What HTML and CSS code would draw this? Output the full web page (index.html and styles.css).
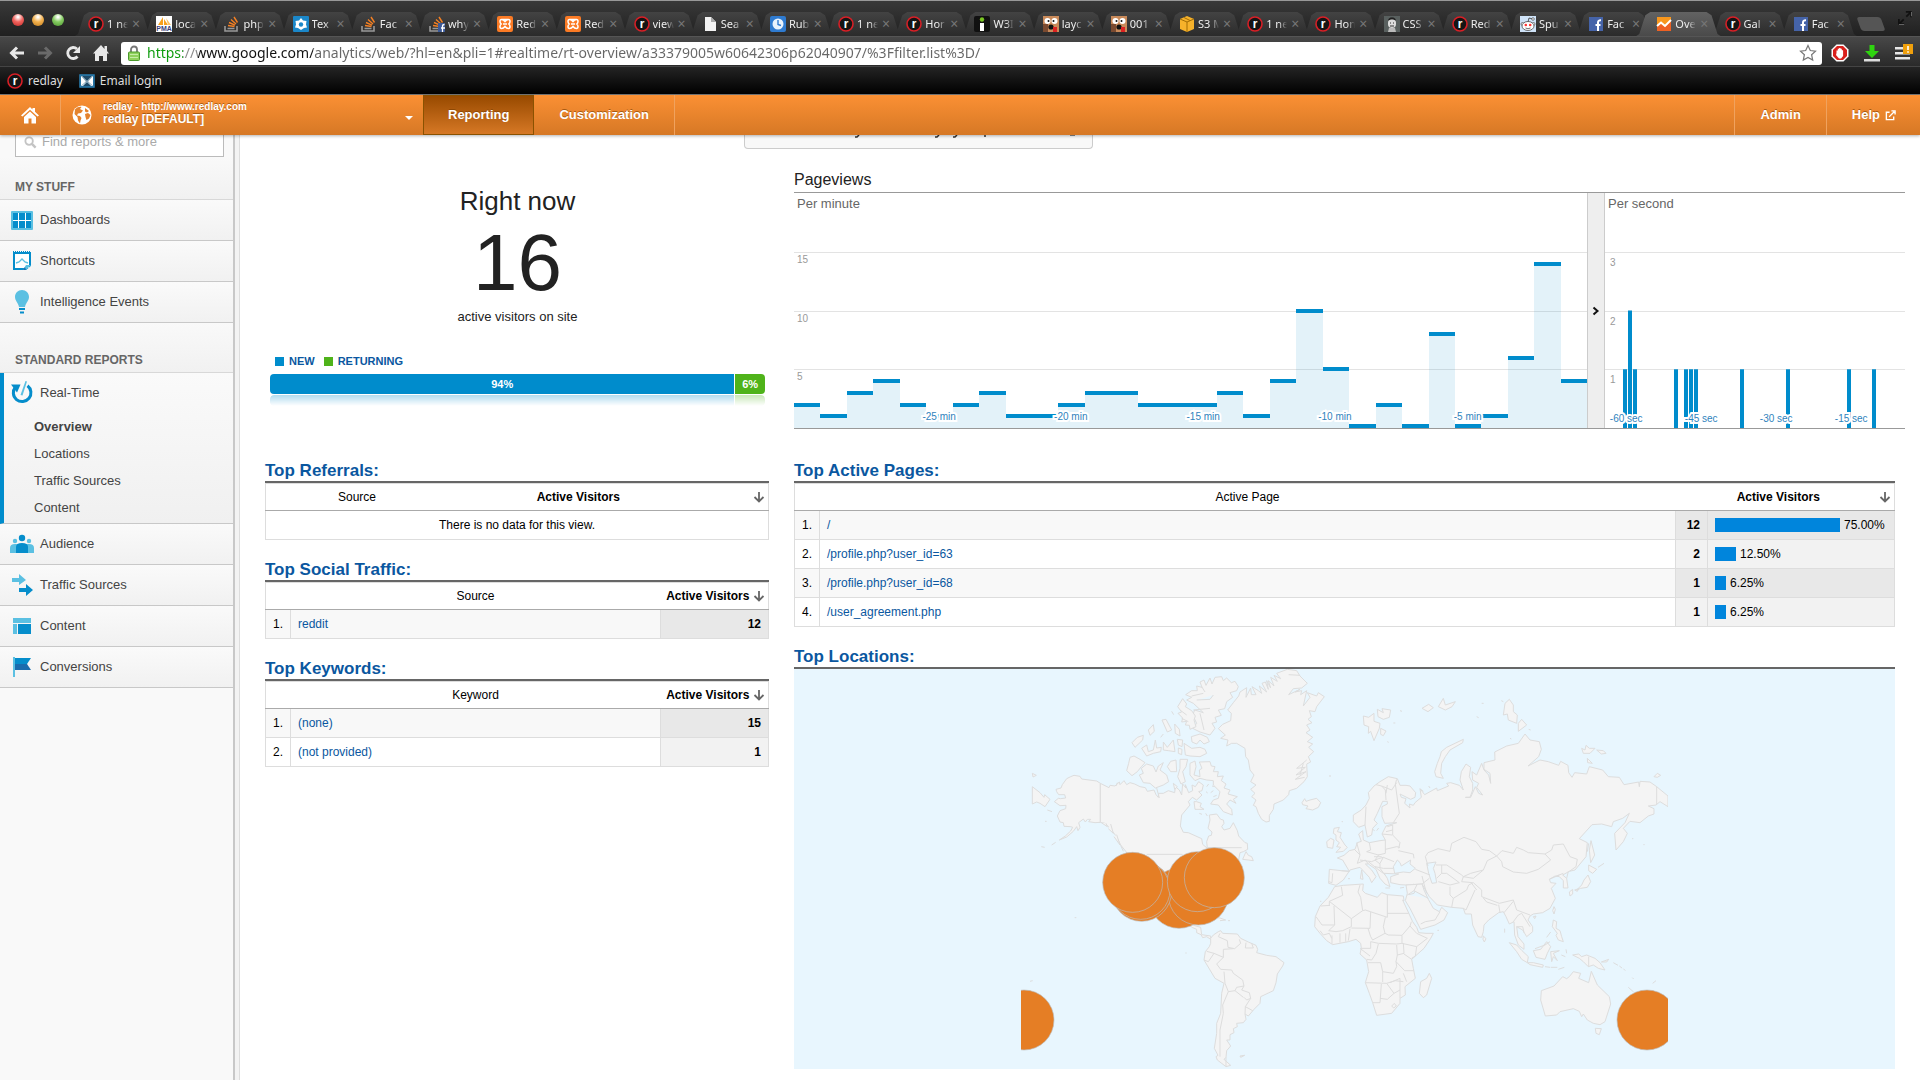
FILE: index.html
```html
<!DOCTYPE html>
<html lang="en">
<head>
<meta charset="utf-8">
<title>Overview - Google Analytics</title>
<link rel="stylesheet" href="styles.css">
</head>
<body>
<svg class="sprite" aria-hidden="true">
  <symbol id="f-r" viewBox="0 0 16 16"><circle cx="8" cy="8" r="7" fill="#151515" stroke="#d81f26" stroke-width="1.6"/><text x="8" y="12" text-anchor="middle" font-family="Liberation Sans, sans-serif" font-weight="700" font-size="12" fill="#fff">r</text></symbol>
  <symbol id="f-pma" viewBox="0 0 16 16"><path d="M0 0h16v16H0z" fill="#fff"/><path d="M2 9 7 1v8zM8 9V3l4 6z" fill="#f8a01c"/><path d="M12 9 10 2l5 7z" fill="#fbc265"/><text x="8" y="15" text-anchor="middle" font-family="Liberation Sans, sans-serif" font-weight="700" font-size="7" fill="#3b3f7a">PMA</text></symbol>
  <symbol id="f-so" viewBox="0 0 16 16"><path d="M1 10v5h12v-5M3.500 12.500h7" fill="none" stroke="#999" stroke-width="1.600"/><path d="m4 9.500 6.500 1M5 6.500l6 2.700M7 3.500l5 4.500M10 1l3.500 5.500" stroke="#f48024" stroke-width="1.400"/></symbol>
  <symbol id="f-sof" viewBox="0 0 16 16"><use href="#f-so"/><path d="M9 7h7v9H9z" fill="#3b5998"/><path d="M13.500 16v-6q0-1.500 2-1.500M12 12h4" fill="none" stroke="#fff" stroke-width="1.300"/></symbol>
  <symbol id="f-tex" viewBox="0 0 16 16"><rect width="16" height="16" rx="1" fill="#1b87c9"/><path d="m8 2 2 2.500 3.500.5L13 8.500l1 3-3 .5-3 2-3-2-3-.5 1-3L2.500 5 6 4.500z" fill="#fff"/><circle cx="8" cy="8.500" r="2.200" fill="#1b87c9"/></symbol>
  <symbol id="f-xampp" viewBox="0 0 16 16"><rect width="16" height="16" rx="2" fill="#fb7a24"/><path d="M4.500 3.500h7q1.500 0 1.500 2 0 1.500-1.200 2.500 1.200 1 1.200 2.500 0 2-1.500 2-2 0-3.500-2-1.500 2-3.500 2Q3 12.500 3 10.500 3 9 4.200 8 3 7 3 5.500q0-2 1.500-2 2 0 3.500 2 1.500-2 3.500-2M6 8h4" fill="none" stroke="#fff" stroke-width="1.500"/></symbol>
  <symbol id="f-doc" viewBox="0 0 16 16"><path d="M3 1h6l5 5v9H3z" fill="#f2f2f2"/><path d="M9 1v5h5z" fill="#aaa"/></symbol>
  <symbol id="f-clock" viewBox="0 0 16 16"><rect width="16" height="16" rx="2" fill="#2f7bd0"/><circle cx="8" cy="8" r="5.500" fill="#e9f3fc"/><path d="M8 4v4.500l3 1" fill="none" stroke="#2f7bd0" stroke-width="1.400"/></symbol>
  <symbol id="f-i" viewBox="0 0 16 16"><rect width="16" height="16" rx="2" fill="#111"/><circle cx="8" cy="3.500" r="2.200" fill="#7ac623"/><path d="M6 7h4v8H6z" fill="#fff"/></symbol>
  <symbol id="f-dog" viewBox="0 0 16 16"><path d="M0 0h16v16H0z" fill="#c98a5a"/><path d="M0 8h5v8H0z" fill="#7a4a30"/><circle cx="4.500" cy="5" r="3" fill="#fff"/><circle cx="11.500" cy="5" r="3" fill="#fff"/><circle cx="5.500" cy="5" r="1" fill="#111"/><circle cx="10.500" cy="5" r="1" fill="#111"/><circle cx="8" cy="11" r="2.600" fill="#111"/><path d="M10 11h4v5h-4z" fill="#d22"/></symbol>
  <symbol id="f-s3" viewBox="0 0 16 16"><path d="m8 0 7 3v10l-7 3-7-3V3z" fill="#f6b22b"/><path d="m1 3 7 3 7-3M8 6v10M5 1.500l6 3" fill="none" stroke="#a26d05" stroke-width="1"/></symbol>
  <symbol id="f-man" viewBox="0 0 16 16"><path d="M0 0h16v16H0z" fill="#59605f"/><path d="M4 7c0-7 8-7 8 0 0 2 0 5-4 5S4 9 4 7z" fill="#ddd"/><path d="M5 12h6l1 4H4z" fill="#bbb"/><path d="M4 5c0-5 8-5 8 0-2-2-6-2-8 0z" fill="#222"/><path d="M6 7h1M9 7h1M6 10h4" stroke="#333"/></symbol>
  <symbol id="f-reddit" viewBox="0 0 16 16"><path d="M0 0h16v16H0z" fill="#cfe3f8"/><path d="M8 6 9 2l4 1" fill="none" stroke="#333" stroke-width=".8"/><circle cx="13" cy="3" r="1.300" fill="#fff" stroke="#333" stroke-width=".6"/><circle cx="2.500" cy="8" r="1.500" fill="#fff" stroke="#333" stroke-width=".6"/><circle cx="13.500" cy="8" r="1.500" fill="#fff" stroke="#333" stroke-width=".6"/><ellipse cx="8" cy="10" rx="6" ry="4.500" fill="#fff" stroke="#333" stroke-width=".7"/><circle cx="5.800" cy="9" r="1.300" fill="#f33"/><circle cx="10.200" cy="9" r="1.300" fill="#f33"/><path d="M5.500 12q2.500 1.500 5 0" fill="none" stroke="#333" stroke-width=".7"/></symbol>
  <symbol id="f-fb" viewBox="0 0 16 16"><path d="M1 1h14v14H1z" fill="#4563a8"/><path d="M10 15V6.500Q10 4 13 4.200M7.500 9h5" fill="none" stroke="#fff" stroke-width="2"/></symbol>
  <symbol id="f-ga" viewBox="0 0 16 16"><path d="M1 1h14v14H1z" fill="#f8971d"/><path d="M1 10l4-2 4 3 6-6v10H1z" fill="#ee6123"/><path d="m1 10 4-3.500 4 3.500 6-6" fill="none" stroke="#fff" stroke-width="2"/></symbol>
  <symbol id="f-mail" viewBox="0 0 16 16"><path d="M1 2h14v12H1z" fill="#1f4a68" stroke="#2a80b4" stroke-width="1.500"/><path d="M2 3l5 5.500L2 13zM14 3 9 8.500l5 4.500z" fill="#fff"/><path d="M2 3h12L8 9zM2 13l5-4h2l5 4z" fill="#cfe4f0"/><path d="M3 3h10L8 8zM4 13l4-4 4 4z" fill="#1f4a68"/></symbol>
  <symbol id="sort" viewBox="0 0 12 12"><path d="M6 1v9M1.500 6 6 10.500 10.500 6" fill="none" stroke="#666" stroke-width="1.800"/></symbol>
</svg>

<header class="browser">
  <div class="tabstrip">
    <div class="lights"><i class="light red"></i><i class="light amber"></i><i class="light green"></i></div>
    <nav class="tabs" aria-label="Open tabs">
      <div class="tab"><svg><use href="#f-r"/></svg><a href="#">1 ne</a><button aria-label="Close">×</button></div>
      <div class="tab"><svg><use href="#f-pma"/></svg><a href="#">loca</a><button aria-label="Close">×</button></div>
      <div class="tab"><svg><use href="#f-so"/></svg><a href="#">php</a><button aria-label="Close">×</button></div>
      <div class="tab"><svg><use href="#f-tex"/></svg><a href="#">Tex</a><button aria-label="Close">×</button></div>
      <div class="tab"><svg><use href="#f-so"/></svg><a href="#">Fac</a><button aria-label="Close">×</button></div>
      <div class="tab"><svg><use href="#f-sof"/></svg><a href="#">why</a><button aria-label="Close">×</button></div>
      <div class="tab"><svg><use href="#f-xampp"/></svg><a href="#">Red</a><button aria-label="Close">×</button></div>
      <div class="tab"><svg><use href="#f-xampp"/></svg><a href="#">Red</a><button aria-label="Close">×</button></div>
      <div class="tab"><svg><use href="#f-r"/></svg><a href="#">view</a><button aria-label="Close">×</button></div>
      <div class="tab"><svg><use href="#f-doc"/></svg><a href="#">Sea</a><button aria-label="Close">×</button></div>
      <div class="tab"><svg><use href="#f-clock"/></svg><a href="#">Rub</a><button aria-label="Close">×</button></div>
      <div class="tab"><svg><use href="#f-r"/></svg><a href="#">1 ne</a><button aria-label="Close">×</button></div>
      <div class="tab"><svg><use href="#f-r"/></svg><a href="#">Hor</a><button aria-label="Close">×</button></div>
      <div class="tab"><svg><use href="#f-i"/></svg><a href="#">W3I</a><button aria-label="Close">×</button></div>
      <div class="tab"><svg><use href="#f-dog"/></svg><a href="#">layc</a><button aria-label="Close">×</button></div>
      <div class="tab"><svg><use href="#f-dog"/></svg><a href="#">001</a><button aria-label="Close">×</button></div>
      <div class="tab"><svg><use href="#f-s3"/></svg><a href="#">S3 M</a><button aria-label="Close">×</button></div>
      <div class="tab"><svg><use href="#f-r"/></svg><a href="#">1 ne</a><button aria-label="Close">×</button></div>
      <div class="tab"><svg><use href="#f-r"/></svg><a href="#">Hon</a><button aria-label="Close">×</button></div>
      <div class="tab"><svg><use href="#f-man"/></svg><a href="#">CSS</a><button aria-label="Close">×</button></div>
      <div class="tab"><svg><use href="#f-r"/></svg><a href="#">Red</a><button aria-label="Close">×</button></div>
      <div class="tab"><svg><use href="#f-reddit"/></svg><a href="#">Spu</a><button aria-label="Close">×</button></div>
      <div class="tab"><svg><use href="#f-fb"/></svg><a href="#">Fac</a><button aria-label="Close">×</button></div>
      <div class="tab active"><svg><use href="#f-ga"/></svg><a href="#">Ove</a><button aria-label="Close">×</button></div>
      <div class="tab"><svg><use href="#f-r"/></svg><a href="#">Gal</a><button aria-label="Close">×</button></div>
      <div class="tab"><svg><use href="#f-fb"/></svg><a href="#">Fac</a><button aria-label="Close">×</button></div>
    </nav>
    <button class="newtab" aria-label="New tab"></button>
    <svg class="full" viewBox="0 0 16 16"><path d="M9 1h6v6M15 1 9.500 6.500M7 15H1V9M1 15l5.500-5.500" fill="none" stroke="#111" stroke-width="2"/><path d="M1 15.500h6M15.500 1v5" stroke="#777" fill="none"/></svg>
  </div>
  <div class="toolbar">
    <button aria-label="Back"><svg viewBox="0 0 16 16"><path d="M15 8H3M8 2.500 2.500 8 8 13.500" fill="none" stroke="#e8e8e8" stroke-width="3"/></svg></button>
    <button aria-label="Forward"><svg viewBox="0 0 16 16"><path d="M1 8h12M8 2.500 13.500 8 8 13.500" fill="none" stroke="#6a6a6a" stroke-width="3"/></svg></button>
    <button aria-label="Reload"><svg viewBox="0 0 16 16"><path d="M12.500 11.500A5.500 5.500 0 1 1 12 4" fill="none" stroke="#e8e8e8" stroke-width="2.800"/><path d="M15 1v7H8z" fill="#e8e8e8"/></svg></button>
    <button aria-label="Home"><svg viewBox="0 0 16 16"><path d="M8 0 0 8.500h2V16h4v-5h4v5h4V8.500h2L14 6V1h-2.500v3z" fill="#e8e8e8"/></svg></button>
    <div class="omnibox">
      <svg class="lock" viewBox="0 0 12 16"><path d="M3 8V4.500a3 3 0 0 1 6 0V8" fill="none" stroke="#777" stroke-width="1.800"/><rect x=".5" y="7" width="11" height="8.500" rx="1" fill="#8fd15c" stroke="#4b9a2b"/><path d="M2 9.500h8M2 12.500h8" stroke="#c5eda6"/></svg>
      <input class="url" aria-label="Address" value="https://www.google.com/analytics/web/?hl=en&amp;pli=1#realtime/rt-overview/a33379005w60642306p62040907/%3Ffilter.list%3D/">
      <svg class="star" viewBox="0 0 18 18"><path d="m9 1.500 2.300 5 5.200.6-3.900 3.600 1.100 5.400L9 13.400l-4.700 2.700 1.100-5.400L1.500 7.100l5.200-.6z" fill="#fff" stroke="#777" stroke-width="1.200"/></svg>
    </div>
    <button class="ext" aria-label="Ad blocker"><svg viewBox="0 0 18 18"><path d="M5.500.5h7l5 5v7l-5 5h-7l-5-5v-7z" fill="#fff"/><path d="M6 2h6l4 4v6l-4 4H6l-4-4V6z" fill="#d9201c"/><path d="M5.500 9V6.500h1.300V4.800h1.300V4h1.400v.8h1.300v1.400h1.300V12l-2 2.500H8L5 11z" fill="#fff"/></svg></button>
    <button class="ext" aria-label="Downloads"><svg viewBox="0 0 18 18"><path d="M6.500 1h5v6H16l-7 7-7-7h4.500z" fill="#2fd410"/><path d="M1 15h16v2.500H1z" fill="#ddd"/></svg></button>
    <button class="ext" aria-label="Menu"><svg viewBox="0 0 18 18"><path d="M0 3h13v2.500H0zm0 5h15v2.500H0zm0 5h15v2.500H0z" fill="#e8e8e8"/><path d="M8 0h10v10H8z" fill="#f0a00c"/><path d="M13 2v4M13 7.200v1.500" stroke="#fff" stroke-width="1.600"/></svg></button>
  </div>
  <nav class="bookmarks">
    <a href="#"><svg><use href="#f-r"/></svg>redlay</a>
    <a href="#"><svg><use href="#f-mail"/></svg>Email login</a>
  </nav>
</header>

<div class="gabar">
  <a class="homelink" href="#" aria-label="Home"><svg viewBox="0 0 20 18"><path d="M10 1 1 9.500l1.500 1L10 3.800l7.500 6.700 1.500-1-4-3.800V2h-2.500v1.500z" fill="#fff"/><path d="M10 5.500 4 11v6.500h4.500v-5h3v5H16V11z" fill="#fff"/></svg></a>
  <button class="account"><svg viewBox="0 0 20 20"><circle cx="10" cy="10" r="9.500" fill="#fff"/><path d="M3 4.500C5 2 8 1.500 9.500 2L8 4l3 1.500L9 8 6 8.500l-1 2 3 .5 1.500 2-1 2.500-.5 3-2-3-.5-3.500L2.500 9zM13 3l4 3-2 1.500-2-1zM13 9l3-1 2.500 2-1.500 3.500-2.500 1.500-1-3z" fill="#e5832d"/></svg>
    <span class="names"><span class="small">redlay - http://www.redlay.com</span><span>redlay [DEFAULT]</span></span><i class="caret"></i></button>
  <nav class="mainnav"><a class="current" href="#">Reporting</a><a href="#">Customization</a></nav>
  <nav class="rightnav"><a href="#">Admin</a><a href="#">Help <svg viewBox="0 0 12 12"><path d="M5 2.500H1.500v8h8V7M4.500 7.500 10 2M7 1h4v4" fill="none" stroke="#fff" stroke-width="1.500"/></svg></a></nav>
</div>

<div class="layout">
  <aside class="sidebar">
    <label class="search"><svg viewBox="0 0 14 14"><circle cx="5.500" cy="5.500" r="4" fill="none" stroke="#c4c4c4" stroke-width="2"/><path d="m8.500 8.500 4 4" stroke="#c4c4c4" stroke-width="2.600"/></svg><input type="text" placeholder="Find reports &amp; more" aria-label="Find reports"></label>
    <h2 class="first">MY STUFF</h2>
    <a class="item" href="#"><svg viewBox="0 0 24 24"><rect x="1" y="3" width="22" height="19" rx="1" fill="#5bc0e2"/><path d="M3 5h5v7H3zM9 5h6v7H9zM16 5h5v7h-5zM3 13h5v7H3zM9 13h6v7H9zM16 13h5v7h-5z" fill="#058dcb"/><path d="M8.500 5v15M15.500 5v15M3 12.500h18" stroke="#fff"/></svg>Dashboards</a>
    <a class="item" href="#"><svg viewBox="0 0 24 24"><path d="M4 4h16v16H4z" fill="#fff" stroke="#058dcb" stroke-width="2"/><path d="M3 2.500h18" stroke="#058dcb" stroke-dasharray="1 1"/><path d="m6 14 3-1 3-3 3 3 3 1" fill="none" stroke="#5bc0e2" stroke-width="1.400"/><path d="M22 16v6h-7z" fill="#f5f5f5"/><path d="M21 16h-5l-3 5h3z" fill="#5bc0e2"/><path d="m13 21 2-3 1 3z" fill="#1a6cae"/></svg>Shortcuts</a>
    <a class="item" href="#"><svg viewBox="0 0 24 24"><path d="M12 0c4 0 7 3 7 7 0 4-3 5-4 10H9C8 12 5 11 5 7c0-4 3-7 7-7z" fill="#5bc0e2"/><path d="M9 18h6v2H9zM10 21.500h4v2h-4z" fill="#058dcb"/></svg>Intelligence Events</a>
    <h2>STANDARD REPORTS</h2>
    <div class="group">
      <a class="item" href="#"><svg viewBox="0 0 24 24"><path d="M17.500 4.800A8.800 8.800 0 1 1 5.500 6" fill="none" stroke="#058dcb" stroke-width="3"/><path d="M1 3.500h9.500L7 11.500z" fill="#058dcb"/><path d="m15.500 0 1.500.5-4.500 14-2-.5z" fill="#5bc0e2"/></svg>Real-Time</a>
      <a class="sub on" href="#">Overview</a>
      <a class="sub" href="#">Locations</a>
      <a class="sub" href="#">Traffic Sources</a>
      <a class="sub" href="#">Content</a>
    </div>
    <a class="item" href="#"><svg viewBox="0 0 24 24"><circle cx="5" cy="9" r="2.200" fill="#5bc0e2"/><circle cx="19" cy="9" r="2.200" fill="#5bc0e2"/><path d="M0 21v-5q0-4 5-4h14q5 0 5 4v5z" fill="#5bc0e2"/><circle cx="12" cy="6" r="3.200" fill="#058dcb"/><path d="M6 21v-6q0-4 6-4t6 4v6z" fill="#058dcb"/></svg>Audience</a>
    <a class="item" href="#"><svg viewBox="0 0 24 24"><path d="M2 5h7V1l7 6-7 5V9H2z" fill="#5bc0e2"/><path d="M9 15h7v-4l7 6-7 6v-4H9z" fill="#058dcb"/></svg>Traffic Sources</a>
    <a class="item" href="#"><svg viewBox="0 0 24 24"><path d="M3 4h18v5H3zM3 10h4v10H3z" fill="#5bc0e2"/><path d="M8 10h13v10H8z" fill="#058dcb"/></svg>Content</a>
    <a class="item" href="#"><svg viewBox="0 0 24 24"><path d="M3 2h2v20H3z" fill="#5bc0e2"/><path d="M5 3h16l-4 6H5z" fill="#058dcb"/><path d="M5 9h12l4 6H5z" fill="#1a6cae"/></svg>Conversions</a>
  </aside>
  <div class="splitter"></div>
  <main class="main">
    <div class="chip"><svg viewBox="0 0 240 4"><path d="M24 0l-2 2h-2M104 0l-2 2h-2M122 0l-2 2h-2M150 0v2" fill="none" stroke="#333" stroke-width="1.500"/><path d="M235 0h5" stroke="#888" stroke-width="2"/></svg></div>
    <div class="cols">
      <div class="left">
        <section class="now">
          <h1>Right now</h1>
          <div class="count">16</div>
          <div class="caption">active visitors on site</div>
          <div class="legend"><i class="new"></i>NEW<i class="ret"></i>RETURNING</div>
          <div class="split"><span class="new" style="width:94%">94%</span><span class="ret" style="width:6%">6%</span></div>
          <div class="reflect"><span class="new" style="width:94%"></span><span class="ret" style="width:6%"></span></div>
        </section>
        <section>
          <h2>Top Referrals:</h2>
          <table>
            <colgroup><col class="c-num"><col class="c-src"><col></colgroup>
            <thead><tr><th></th><th>Source</th><th class="val"><div class="sorted loose"><span>Active Visitors</span><svg><use href="#sort"/></svg></div></th></tr></thead>
            <tbody><tr class="empty"><td colspan="3">There is no data for this view.</td></tr></tbody>
          </table>
        </section>
        <section>
          <h2>Top Social Traffic:</h2>
          <table>
            <colgroup><col class="c-num"><col><col class="c-vis"></colgroup>
            <thead><tr><th></th><th>Source</th><th class="val"><div class="sorted"><span>Active Visitors</span><svg><use href="#sort"/></svg></div></th></tr></thead>
            <tbody><tr><td>1.</td><td><a href="#">reddit</a></td><td class="n">12</td></tr></tbody>
          </table>
        </section>
        <section>
          <h2>Top Keywords:</h2>
          <table>
            <colgroup><col class="c-num"><col><col class="c-vis"></colgroup>
            <thead><tr><th></th><th>Keyword</th><th class="val"><div class="sorted"><span>Active Visitors</span><svg><use href="#sort"/></svg></div></th></tr></thead>
            <tbody><tr><td>1.</td><td><a href="#">(none)</a></td><td class="n">15</td></tr><tr><td>2.</td><td><a href="#">(not provided)</a></td><td class="n">1</td></tr></tbody>
          </table>
        </section>
      </div>
      <div class="right">
        <section class="views">
          <h3>Pageviews</h3>
          <div class="charts">
            <div class="chart minutes">
              <div class="lines"><i></i><i></i><i></i><i></i></div>
              <div class="bars">
                <i style="--v:2"></i><i style="--v:1"></i><i style="--v:3"></i><i style="--v:4"></i><i style="--v:2"></i><i style="--v:1"></i><i style="--v:2"></i><i style="--v:3"></i><i style="--v:1"></i><i style="--v:1"></i><i style="--v:2"></i><i style="--v:3"></i><i style="--v:3"></i><i style="--v:2"></i><i style="--v:2"></i><i style="--v:2"></i><i style="--v:3"></i><i style="--v:1"></i><i style="--v:4"></i><i style="--v:10"></i><i style="--v:5"></i><i style="--v:0"></i><i style="--v:2"></i><i style="--v:0"></i><i style="--v:8"></i><i style="--v:0"></i><i style="--v:1"></i><i style="--v:6"></i><i style="--v:14"></i><i style="--v:4"></i>
              </div>
              <div class="title">Per minute</div>
              <div class="scale"><span>15</span><span>10</span><span>5</span></div>
              <span class="tick" style="left:16.2%">-25 min</span><span class="tick" style="left:32.8%">-20 min</span><span class="tick" style="left:49.5%">-15 min</span><span class="tick" style="left:66.1%">-10 min</span><span class="tick" style="left:83.2%">-5 min</span>
            </div>
            <button class="toggle" aria-label="Collapse"><svg viewBox="0 0 8 10"><path d="m1.500 1.500 4 3.500-4 3.500" fill="none" stroke="#111" stroke-width="2"/></svg></button>
            <div class="chart seconds">
              <div class="lines"><i></i><i></i><i></i><i></i></div>
              <svg class="bars" viewBox="0 0 300 236" preserveAspectRatio="none"><path d="M18 177h4v59h-4zM23 118h4v118h-4zM28 177h4v59h-4zM69 177h4v59h-4zM79 177h4v59h-4zM84 177h4v59h-4zM89 177h4v59h-4zM135 177h4v59h-4zM181 177h4v59h-4zM242 177h4v59h-4zM267 177h4v59h-4z" fill="#008ccc"/></svg>
              <div class="title">Per second</div>
              <div class="scale low"><span>3</span><span>2</span><span>1</span></div>
              <span class="tick" style="left:1.6%">-60 sec</span><span class="tick" style="left:26.6%">-45 sec</span><span class="tick" style="left:51.6%">-30 sec</span><span class="tick" style="left:76.6%">-15 sec</span>
            </div>
          </div>
        </section>
        <section class="inset">
          <h2>Top Active Pages:</h2>
          <table class="pages">
            <colgroup><col class="c-num"><col><col class="c-cnt"><col class="c-pct"></colgroup>
            <thead><tr><th></th><th>Active Page</th><th class="val" colspan="2"><div class="sorted"><span>Active Visitors</span><svg><use href="#sort"/></svg></div></th></tr></thead>
            <tbody>
              <tr><td>1.</td><td><a href="#">/</a></td><td class="n">12</td><td class="n"><div class="meter"><i style="width:125px"></i>75.00%</div></td></tr>
              <tr><td>2.</td><td><a href="#">/profile.php?user_id=63</a></td><td class="n">2</td><td class="n"><div class="meter"><i style="width:21px"></i>12.50%</div></td></tr>
              <tr><td>3.</td><td><a href="#">/profile.php?user_id=68</a></td><td class="n">1</td><td class="n"><div class="meter"><i style="width:11px"></i>6.25%</div></td></tr>
              <tr><td>4.</td><td><a href="#">/user_agreement.php</a></td><td class="n">1</td><td class="n"><div class="meter"><i style="width:11px"></i>6.25%</div></td></tr>
            </tbody>
          </table>
        </section>
        <section class="inset">
          <h2>Top Locations:</h2>
          <div class="map">
            <svg viewBox="63 27 1941 1200" role="img" aria-label="World map of active visitors">
              <g class="land">
                <path d="M301 370 290 363 245 357 240 349 222 346 212 350 200 356 187 374 183 384 168 388 170 395 176 404 194 404 197 414 182 416 175 415 163 425 180 437 198 436 197 446 180 452 172 468 180 486 190 488 192 499 212 500 218 502 212 513 196 528 178 540 200 531 220 514 230 500 234 512 240 502 236 488 250 477 256 486 262 478 272 478 266 485 285 488 301 487Z"/>
                <path d="M301 370 327 383 330 376 345 378 358 366 360 374 372 362 380 374 390 368 404 372 420 380 436 383 442 394 462 390 468 404 475 412 476 400 490 400 505 392 524 398 526 380 538 390 545 405 548 372 558 384 556 374 566 398 578 392 576 375 586 380 596 365 610 375 606 392 596 395 606 405 590 420 577 412 565 425 570 435 560 447 545 465 541 498 550 517 565 518 605 536 608 553 622 565 620 545 626 528 634 526 636 516 624 505 630 480 628 465 650 462 662 478 670 480 672 490 665 500 672 510 690 505 700 488 712 512 716 528 735 548 742 550 743 568 730 575 720 578 712 620 560 640 540 690 480 690 400 620 378 575 362 555 350 530 330 505 315 490 301 487Z"/>
                <path d="M304 488 322 500 318 490M325 506 340 520 332 492M342 530 360 555 350 524M362 556 370 574M470 384 478 414M348 378 352 368"/>
                <path d="M440 583H548M622 563H725M590 425 604 430 600 440 612 448 585 448 582 425ZM617 460l5 8M598 460l8 3M632 398l8-6M640 410l10-4M620 380l6-8M618 395l5 4M636 378l8 2"/>
                <path d="M655 206 668 193 692 182 694 160 683 150 700 128 716 108 720 96 740 83 738 112 752 84 754 104 768 104 756 80 775 92 785 100 778 78 800 96 786 70 796 66 805 88 800 62 812 84 805 62 822 78 812 52 832 64 822 46 842 56 830 40 862 28 890 32 900 48 922 70 905 84 880 86 866 104 900 88 885 96 905 92 902 104 920 92 910 138 930 112 922 98 950 108 955 98 973 110 950 140 945 155 928 152 934 170 924 178 936 188 920 195 930 210 918 218 938 232 922 245 938 252 926 262 941 275 925 290 932 306 920 312 922 350 912 365 890 385 868 392 866 404 850 420 822 432 820 448 808 466 808 484 798 486 785 478 775 460 768 440 760 436 768 420 755 410 765 400 752 388 768 375 752 365 762 345 750 330 745 300 737 290 735 265 710 250 695 250 680 258 684 240 662 235 676 225Z"/>
                <path d="M866 44 900 46M920 300 890 325 916 322 888 345 918 335 886 358 914 352M910 310 900 345"/>
                <path d="M557 104 575 92 592 92 590 78 606 82 600 66 612 60 618 76 630 54 636 72 645 52 665 50 670 62 680 54 694 68 705 64 715 80 710 92 690 98 698 112 680 125 674 146 655 150 664 166 645 172 650 186 636 190 645 205 630 225 600 216 578 205 590 190 578 165 584 150 610 158 580 130 560 120 575 112ZM575 108 610 100M590 120 630 118 640 105M605 80 615 96M600 160 612 210M580 150 630 145"/>
                <path d="M548 116 560 132 556 140 575 152 586 168 582 180 588 200 570 208 568 196 556 195 560 184 545 186 548 174 534 160 545 156 533 140ZM540 150 560 165M545 175 565 185"/>
                <path d="M574 230 600 222 622 232 628 245 612 252 600 240 590 252 576 246ZM552 250 575 265 600 262 615 268 620 280 600 290 570 288 556 285ZM390 292 402 288 420 298 435 308 424 320 412 335 396 347 380 332 386 310ZM418 345 430 340 424 325 440 312 460 318 468 336 475 318 490 308 480 330 500 345 506 365 490 375 466 384 450 370 430 368ZM396 248 412 232 430 226 428 240 405 262ZM425 265 440 255 445 275 460 270 466 240 470 264 484 262 482 275 460 280 440 288ZM445 210 460 194 463 214 450 226ZM486 180 498 178 515 210 502 216ZM524 192 538 208 540 228 526 220ZM490 246 502 262 520 240 525 275 505 272 490 270ZM532 238 548 240 546 260 535 255ZM535 264 546 268 545 284 535 280ZM502 320 512 304 528 300 530 335 512 335ZM540 298 563 298 558 320 548 335 556 365 543 372 533 350 540 325ZM515 154l6 10M490 222l-8 10M520 370l12 10-8 8z"/>
                <path d="M570 310 585 303 588 320 582 345 600 350 598 330 606 325 598 306 630 305 634 318 645 320 640 335 655 335 652 350 670 348 664 362 678 372 672 384 690 390 684 402 712 410 700 418 708 430 690 420 680 432 695 448 697 465 670 455 655 435 632 432 640 420 655 415 660 395 640 375 640 362 620 360 600 355 585 362 570 345Z"/>
                <path d="M728 598 738 575 745 586 755 590 760 602 745 600ZM906 428 914 416 918 424 930 420 950 415 962 428 955 442 938 450 918 446 924 438 908 434ZM97 380 120 398 132 412 134 404 150 418 135 440 120 430 110 426 97 432ZM97 340l12 6-10 5zM142 450l14 5M124 560l10 2M155 555l12-8M224 773h5M90 964l8-2M640 772l20 2 17 6-17 2M684 782h6M720 1188l14-2-12 6zM135 484h5M558 877v4M988 348h4"/>
                <path d="M560 790 578 803 590 808 590 818 603 824 608 833 620 830 632 838 632 828 605 824 602 802Z"/>
                <path d="M632 835 640 825 655 815 662 812 668 820 712 822 722 835 745 846 768 856 773 868 770 878 800 886 828 890 852 908 848 918 832 942 828 968 820 992 782 1010 780 1030 762 1048 745 1068 735 1062 738 1078 730 1088 710 1090 712 1100 700 1106 702 1118 690 1124 690 1140 680 1140 692 1158 680 1172 678 1192 672 1198 692 1216 678 1220 652 1200 648 1190 654 1186 643 1165 650 1120 650 1090 662 1060 665 1000 672 970 645 955 630 930 612 900 616 875 628 860 632 850Z"/>
                <path class="border" d="M672 935 675 970 685 995 668 1035 670 1060 660 1110 660 1190M612 900 625 905 642 880 620 874M642 880 670 892 670 868 700 866M670 892 650 912 662 928 695 930 700 940 728 960 732 978 725 990 748 998 752 1015 740 1020 732 1012M685 995 705 992 710 982 732 978M705 992 730 1012M752 1015 736 1040 735 1062M736 1040 758 1052M660 820 655 830 682 842 684 862 704 866 722 850 718 838M738 848 736 864 760 864 755 850M678 1192V1218"/>
              </g>
              <g class="land" transform="translate(900 0)">
                <path d="M88 628 124 632 148 634 128 600 112 594 132 586 148 572 165 568 172 548 184 544 176 522 188 512 190 540 208 548 240 542 256 540 246 522 258 498 290 488 254 490 246 470 246 440 262 432 262 424 248 424 232 460 222 480 232 490 218 505 215 525 202 531 195 495 176 502 160 485 160 465 184 450 198 435 208 415 205 398 222 378 240 365 265 350 292 356 300 376 318 376 330 378 347 398 345 412 332 418 300 402 304 412 318 416 314 430 330 444 328 432 340 436 345 428 364 412 360 386 374 404 410 384 412 392 446 378 440 370 452 368 478 376 490 390 480 360 484 335 498 312 512 322 508 350 518 370 518 390 510 412 496 412 512 412 526 380 536 400 548 405 530 382 536 370 518 360 516 335 530 345 545 310 552 330 566 345 572 370 570 340 552 328 552 308 585 300 584 276 620 258 655 250 675 222 690 240 718 245 724 268 716 290 684 318 720 300 745 305 776 316 782 304 804 316 806 338 816 352 824 338 860 342 868 320 908 330 925 350 958 352 972 374 1016 366 1018 380 1020 364 1050 366 1070 380 1104 408V440L1080 425 1068 435 1045 438 1062 446 1062 462 1045 468 1020 488 990 484 970 505 982 520 970 545 948 570 944 520 975 488 988 460 968 475 940 485 935 500 905 492 876 494 838 536 862 548 858 590 825 630 808 634 788 645 800 655 804 684 790 684 790 662 778 650 765 648 748 658 752 668 768 670 754 685 766 715 750 745 728 758 700 762 690 768 684 780 698 800 698 815 680 830 668 810 650 800 654 830 672 852 672 868 655 855 644 825 642 785 628 792 618 770 610 755 596 758 566 780 552 795 550 815 545 832 534 830 518 795 514 762 496 762 490 745 455 742 412 735 388 710 366 672 320 675 300 674 272 668 272 650 296 642 252 640 262 655 270 680 255 672 240 655 228 628 205 612 196 612 215 630 228 650 215 668 208 652 180 622 168 625 150 630 130 660 108 676 86 670Z"/>
                <path class="sea" d="M284 640 280 620 292 600 300 608 304 618 332 600 330 612 346 625 330 638 310 636ZM380 610 408 606 400 625 405 640 410 668 396 670 386 640Z"/>
                <path class="border" d="M384 618 376 590 384 578 414 566 450 574 455 550 492 532 528 545 545 568 568 572 590 588 606 572 640 580 650 562 670 570 685 578 735 582 755 570 760 555 790 552 810 590 832 598 828 620 808 634M590 588 605 605 608 620 640 636 680 640 715 628 752 600 735 582M590 588 562 602 550 630 512 640 490 650 485 645 440 615 408 615M425 615 425 640 410 655M425 640 440 640 478 668 450 675 415 665M550 630 520 655 490 650 485 665 518 668M366 672 388 655M450 680 450 705 460 715 455 742M460 715 500 690 506 675 520 668 545 690 545 710 598 730 640 720 650 750 690 765M525 690 498 750 490 745M515 670 530 690M550 714 560 726 592 736M596 734 600 758M612 758 640 724M655 765 640 785M655 765 665 760 690 800M650 800 668 800 672 818M748 658 778 645M765 650 790 640M805 634 800 655M866 550 862 575M1070 380V432"/>
                <path class="border" d="M165 570 180 585 172 610 196 600 205 612M170 548 180 585M208 548 212 570 200 575 235 585 256 580 256 540M180 600 215 605 235 596 250 592 282 605M238 582 225 600 240 612M256 568 290 560 300 562M295 572 340 582 342 595M262 500 278 495 278 525 300 548 296 565M246 522 276 525M258 515 278 510M225 620 250 625 280 625M250 592 240 610 240 625 255 645M262 375 258 400M198 440 195 495M228 374 245 378 256 390 258 420M245 378 275 390 290 368M290 358 286 372 298 460 280 488M98 640 96 668 86 665M124 632 148 634M366 648 372 672M340 672 352 680 342 700 322 705M372 672 380 700M346 628 390 645M205 605 230 625 250 640M222 590 245 590"/>
                <path d="M318 675 322 700 316 722 330 745 362 808 405 795 432 780 443 758 425 742 418 755 400 745 385 718 372 690 366 672ZM362 792 376 785 405 780 420 755M322 705 342 692 385 715M342 692 352 672"/>
                <path d="M104 680 130 676 190 672 188 692 196 700 232 712 245 698 262 704 310 708 312 722 308 720 338 785 350 802 356 818 378 820 400 820 392 835 372 865 335 898 340 925 346 955 315 980 316 1005 300 1015 300 1030 275 1060 230 1066 218 1028 208 1000 196 968 206 935 200 900 180 882 184 865 182 850 168 838 145 845 98 854 80 842 60 820 44 800 46 770 60 738 85 712Z"/>
                <path class="border" d="M124 680 128 706 88 724 154 776 188 752 182 712 174 696 180 675M62 738 90 736M88 724V738M102 738 104 795 66 795 48 770M154 776 154 800 128 812 108 815 86 812 104 795M188 752 196 750 262 772 262 704M212 756 210 805 154 804M262 760 326 760M256 772 250 800 255 820M204 805 212 830 218 840 255 820 265 825 306 826 330 798 334 785M184 865 212 865 212 845 235 850 290 852 306 850 306 826M306 850 350 860 382 835 350 820 330 798M350 860 346 888 335 895M310 850 312 880 292 885 290 855M292 885 288 905 290 920 280 940 248 935 242 908 204 908M235 852 228 880 215 900 200 898M196 968 260 970 285 962 310 965M248 935V966M312 882 335 898M288 905 314 932 342 932M244 972 240 1028 218 1028M260 970 282 1000 262 1018 240 1015M270 968 300 955 300 990 282 1000M300 990 300 1015M275 1038l8-8 6 8-8 6zM150 806 145 842M137 820V845M120 820V848M96 826V852M60 812 70 825 88 820 95 835M180 865 210 888M310 940 320 965"/>
                <path d="M388 940 395 955 380 1005 370 1013 358 1000 362 965 380 955ZM102 505 118 502 112 515 124 518 120 532 135 555 142 562 130 574 108 577 122 562 110 560 118 548 108 540 108 525 100 520ZM80 545 92 535 102 540 98 565 82 562ZM190 168 206 172 222 160 222 184 240 190 238 205 222 242 212 214 205 220 206 200 192 195ZM232 148 250 158 246 146 272 150 268 172 250 178 234 170ZM242 205l16 8-8 14-8-4zM490 238 488 248 450 270 436 290 425 310 422 340 430 355 408 350 404 335 412 310 420 290 424 275 440 262ZM366 145l20-12 14 10-16 12zM415 140l15-25 6 20 30-10-10 15-20 10zM615 130 628 118 640 135 640 155 652 165 650 190 625 180 622 162 610 165ZM655 190 665 178 680 195 655 214ZM845 265 855 270 858 256 868 265 885 265 870 280 850 280ZM890 270l20 2 8 8-14 2zM862 295l15 15-14-2zM1062 350l10-10 10 6-10 6z"/>
                <path d="M873 542 884 585 872 608 868 570ZM866 615 890 628 878 640 866 632ZM894 622l18-12M864 645 872 665 862 682 842 685 830 690 845 675 852 660ZM808 696l10-8v14l-8 6zM824 690l12-4-4 8zM762 740l4 8-4 14-4-10zM700 770l8-2-4 8zM760 780 770 785 768 805 780 812 785 830 790 845 775 840 768 826 772 820 757 800ZM740 832l12-16M550 828l8 8-5 10-4-8zM628 848 650 855 666 872 685 890 682 908 665 898 650 875ZM682 908 700 908 730 915 728 922 690 914ZM700 872 722 868 740 845 752 860 742 880 735 898 708 892ZM705 866 735 855 750 845M752 875 778 872 760 880 772 902 760 890 755 905ZM818 885 836 882 845 890 860 885 885 895 900 908 915 930 895 925 880 915 865 920 850 905 838 895ZM866 890V920M735 920l15 2M752 922l20 0M775 928l18-6M784 885l12 5M798 868l2 12M904 906l22-8-6 8zM940 908l14 8M958 918l8 6M970 926l6 6M997 953l4 4M1058 970l10-8M985 982l16 14M185 630l4 28-8-2zM144 656h6M256 684h14M300 684l12-2M60 724h4M412 811h5M614 806v12M1030 554h4M996 536h4M125 485h4M88 348h4M362 388l8 6M386 378l4 6M545 130h6M530 170l6 3M604 122l6 3M300 152l6 2M280 189h6M262 245l4 2M630 235l4 2M686 208l6 2M218 508l6 4M230 512l6-8"/>
                <path d="M724 992 762 978 788 950 800 956 808 950 820 935 842 940 836 955 866 968 874 934 892 975 928 1010 932 1032 915 1085 900 1094 880 1090 862 1080 850 1062 845 1070 838 1054 820 1046 780 1055 770 1065 736 1068 722 1020ZM886 1105 904 1106 898 1124 888 1120Z"/>
              </g>
              <g class="dots">
                <circle cx="537" cy="715" r="90"/><circle cx="595" cy="705" r="90"/><circle cx="425" cy="694" r="90"/><circle cx="422" cy="690" r="88"/><circle cx="592" cy="665" r="90"/><circle cx="398" cy="667" r="90"/><circle cx="643" cy="653" r="90"/><circle cx="72" cy="1080" r="90"/><circle cx="1941" cy="1080" r="90"/>
              </g>
            </svg>
          </div>
        </section>
      </div>
    </div>
  </main>
</div>
</body>
</html>
```

FILE: styles.css
```css
* { box-sizing: border-box; }
body {
  margin: 0;
  min-height: 100vh;
  display: flex;
  flex-direction: column;
  background: #fff;
  color: #222;
  font: 13px/20px "Liberation Sans", Arial, sans-serif;
}
a { color: inherit; text-decoration: none; }
button { border: 0; padding: 0; margin: 0; background: none; font: inherit; color: inherit; }
h1, h2, h3 { margin: 0; font-weight: 400; }
svg { display: block; flex: none; }
.sprite { display: none; }

/* Browser window */
.browser { background: #222; font-family: "Noto Sans", sans-serif; color: #ddd; }
.tabstrip {
  height: 37px;
  display: flex;
  padding-right: 8px;
  border-top: 1px solid #999;
  border-bottom: 1px solid #555;
  background: linear-gradient(#393939, #202020);
}
.lights { width: 76px; display: flex; gap: 8px; padding: 13px 0 0 12px; flex: none; }
.light { width: 12px; height: 12px; border-radius: 50%; }
.red { background: radial-gradient(circle at 50% 25%, #fff 5%, #f2655f 45%, #c22a28); }
.amber { background: radial-gradient(circle at 50% 25%, #fff 5%, #f4b24f 45%, #c07d1e); }
.green { background: radial-gradient(circle at 50% 25%, #fff 5%, #86cc62 45%, #4c9530); }
.tabs { flex: 1; display: flex; min-width: 0; }
.tab {
  flex: 1 1 0;
  min-width: 0;
  position: relative;
  z-index: 0;
  margin-top: 11px;
  padding-left: 12px;
  display: flex;
  align-items: center;
  gap: 3px;
  font-size: 11px;
}
.tab::before {
  content: "";
  position: absolute;
  z-index: -1;
  inset: 0 -8px 0 -1px;
  background: linear-gradient(#434343, #2b2b2b);
  clip-path: polygon(0 100%, 3px 92%, 9px 14%, 14px 0, calc(100% - 14px) 0, calc(100% - 9px) 14%, calc(100% - 3px) 92%, 100% 100%);
}
.tab.active { z-index: 1; }
.tab.active::before { left: -8px; background: linear-gradient(#626262, #4a4a4a); }
.tab svg { width: 16px; height: 16px; }
.tab a {
  width: 21px;
  overflow: hidden;
  white-space: nowrap;
  color: #eee;
  -webkit-mask-image: linear-gradient(90deg, #000 60%, transparent);
  mask-image: linear-gradient(90deg, #000 60%, transparent);
}
.tab button { width: 10px; color: #777; font-size: 14px; line-height: 14px; }
.newtab { width: 24px; height: 14px; margin: 16px 15px 0 10px; background: #555; transform: skewX(20deg); border-radius: 3px; }
.full { width: 14px; height: 14px; margin-top: 10px; }
.toolbar {
  height: 29px;
  display: flex;
  align-items: center;
  padding: 3px 2px 0 9px;
  background: linear-gradient(#484848, #2a2a2a);
}
.toolbar > button { width: 28px; }
.toolbar > button svg { width: 16px; height: 16px; }
.toolbar > .ext { width: 32px; padding-left: 9px; }
.toolbar > .ext svg { width: 18px; height: 18px; }
.omnibox {
  flex: 1;
  height: 23px;
  display: flex;
  align-items: center;
  padding: 0 5px 0 7px;
  border-radius: 3px;
  background: #fff;
}
.lock { width: 12px; height: 16px; }
.star { width: 18px; height: 18px; }
.url {
  flex: 1;
  border: 0;
  padding: 0;
  margin: 0 8px 0 7px;
  outline: 0;
  font: 14px/20px "Noto Sans", sans-serif;
  -webkit-text-fill-color: transparent;
  background: linear-gradient(90deg, #0a9a0a 36px, #888 36px 51px, #111 51px 166px, #666 166px);
  -webkit-background-clip: text;
  background-clip: text;
}
.bookmarks {
  height: 29px;
  display: flex;
  align-items: center;
  gap: 16px;
  padding: 0 7px;
  background: linear-gradient(#242424, #000);
  border-top: 1px solid #444;
  border-bottom: 1px solid #777;
  font-size: 12px;
}
.bookmarks a { display: flex; align-items: center; gap: 5px; }
.bookmarks svg { width: 16px; height: 16px; }

/* Analytics header */
.gabar {
  height: 40px;
  display: flex;
  background: linear-gradient(#fb9034, #d67825);
  color: #fff;
  font-weight: 700;
  text-shadow: 0 -1px 0 rgba(120, 60, 0, .6);
  box-shadow: 0 1px 3px rgba(0, 0, 0, .3);
  position: relative;
  z-index: 2;
}
.homelink { width: 61px; display: grid; place-items: center; border-right: 1px solid #f0a25e; }
.homelink svg { width: 20px; height: 18px; }
.account { width: 362px; display: flex; align-items: center; gap: 11px; padding: 0 10px 0 11px; text-align: left; font-weight: 700; font-size: 12px; text-shadow: inherit; }
.account > svg { width: 20px; height: 20px; }
.names { flex: 1; display: grid; line-height: 12px; padding-bottom: 4px; }
.small { font-size: 10px; }
.caret { border: 4px solid transparent; border-top-color: #fff; border-bottom: 0; margin-top: 6px; }
.mainnav { flex: 1; display: flex; }
.mainnav a { padding: 10px 25px; border-right: 1px solid #f0a25e; }
.mainnav .current { background: linear-gradient(#984a00, #d67825); border: 1px solid #8a5200; padding: 9px 24px; }
.rightnav { display: flex; }
.rightnav a { display: flex; gap: 5px; align-items: center; padding: 0 25px; border-left: 1px solid #f0a25e; }
.rightnav a + a { padding-right: 24px; }
.rightnav svg { width: 11px; height: 11px; }

/* Page */
.layout { flex: 1; display: flex; overflow: hidden; }
.sidebar { width: 233px; flex: none; background: #f9f9f9; color: #444; }
.search {
  display: flex;
  align-items: center;
  gap: 5px;
  height: 30px;
  margin: -8px 9px 0 15px;
  padding-left: 8px;
  border: 1px solid #bbb;
  background: #fff;
}
.search svg { width: 13px; height: 13px; }
.search input { flex: 1; min-width: 0; border: 0; padding: 0; outline: 0; background: none; font: inherit; }
.search input::placeholder { color: #aaa; }
.sidebar h2 {
  padding: 27px 15px 2px;
  border-bottom: 1px solid #d8d8d8;
  background: linear-gradient(#f9f9f9, #f1f1f1);
  color: #666;
  font-size: 12px;
  font-weight: 700;
}
.sidebar h2.first { padding-top: 20px; }
.item {
  display: flex;
  align-items: center;
  gap: 6px;
  height: 41px;
  padding: 0 10px 1px;
  border-bottom: 1px solid #c8c8c8;
  background: linear-gradient(#fafafa, #f1f1f1);
}
.item svg { width: 24px; height: 24px; }
.group { border-left: 4px solid #008ccc; border-bottom: 1px solid #c8c8c8; padding-bottom: 2px; background: linear-gradient(#fafafa, #f0f0f0); }
.group .item { border: 0; background: none; height: 40px; padding: 0 6px; }
.sub { display: block; padding-left: 30px; line-height: 27px; }
.on { font-weight: 700; }
.splitter { width: 7px; flex: none; background: #f3f3f3; border-left: 2px solid #c8c8c8; border-right: 1px solid #ddd; }
.main { flex: 1; min-width: 0; padding: 0 25px 11px; }
.chip { width: 349px; height: 14px; margin-left: 29.4%; background: #f8f8f8; border: 1px solid #ccc; border-top: 0; border-radius: 0 0 4px 4px; padding-left: 90px; }
.chip svg { width: 240px; height: 4px; }
.cols { display: flex; gap: 25px; }
.left { flex: 0 0 504px; }
.right { flex: 1; min-width: 0; margin-right: -10px; }
.inset { margin-right: 10px; }
section + section { margin-top: 20px; }
section h2 { color: #0a57a0; font-size: 17px; font-weight: 700; border-bottom: 2px solid #666; line-height: 20px; }

/* Right now */
.now { height: 292px; padding: 36px 4px 0 5px; text-align: center; }
h1 { font-size: 26px; line-height: 32px; }
.count { font-size: 80px; line-height: 84px; margin-top: 4px; }
.caption { margin-top: 2px; line-height: 20px; }
.legend { display: flex; align-items: center; margin-top: 24px; padding-left: 5px; color: #0a57a0; font-size: 11px; font-weight: 700; }
.legend i { width: 9px; height: 9px; margin-right: 5px; }
.legend .ret { margin-left: 9px; }
.new { background: #008ccc; }
.ret { background: #4fb31a; }
.split, .reflect { display: flex; gap: 1px; border-radius: 4px; overflow: hidden; color: #fff; font-size: 11px; font-weight: 700; }
.split { margin-top: 3px; height: 20px; }
.reflect { margin-top: 1px; height: 11px; opacity: .3; -webkit-mask-image: linear-gradient(#000, transparent); mask-image: linear-gradient(#000, transparent); }

/* Tables */
table { width: 100%; table-layout: fixed; border-collapse: collapse; color: #000; font-size: 12px; line-height: 16px; border: 1px solid #ddd; }
.c-num { width: 25px; }
.c-src { width: 133px; }
.c-vis { width: 108px; }
.c-cnt { width: 32px; }
.c-pct { width: 187px; }
th { height: 27px; padding: 0; font-weight: 400; border-bottom: 1px solid #aaa; }
.val { font-weight: 700; }
.sorted { display: flex; align-items: center; padding: 0 3px 0 2px; }
.sorted span { flex: 1; }
.sorted svg { width: 12px; height: 12px; }
.loose { gap: 22px; }
td { height: 29px; padding: 0 7px; border: 1px solid #ddd; }
tbody tr:nth-child(odd) { background: #f8f8f8; }
tbody tr.empty { background: #fff; text-align: center; }
td:first-child { text-align: center; padding: 0; }
td a { color: #0a57a0; }
.n { text-align: right; font-weight: 700; background: #f2f2f2; }
tr:nth-child(odd) .n { background: #e8e8e8; }
.meter { display: flex; align-items: center; gap: 4px; font-weight: 400; }
.meter i { height: 14px; background: #0085dc; }

/* Pageviews */
.views { height: 292px; padding-top: 21px; }
h3 { font-size: 16px; line-height: 20px; padding-bottom: 2px; border-bottom: 1px solid #999; }
.charts { display: flex; height: 236px; border-bottom: 1px solid #999; }
.chart { position: relative; flex: 1; display: grid; }
.chart > .lines, .chart > .bars { grid-area: 1 / 1; }
.seconds { flex: 0 0 300px; }
.lines { display: grid; grid-template-rows: repeat(4, 1fr); }
.lines i + i { border-top: 1px solid #e3e3e3; }
.bars { display: flex; align-items: flex-end; width: 100%; height: 235px; }
.bars i { flex: 1; height: calc(var(--v) * 5% + 2px); border-top: 4px solid #008ccc; background: rgba(0, 140, 204, .11); }
.title { position: absolute; top: 1px; left: 3px; color: #666; }
.scale { position: absolute; inset: 59px auto 0 3px; display: grid; grid-template-rows: repeat(3, 1fr); color: #999; font-size: 10px; line-height: 16px; }
.low { inset: 62px auto -3px 5px; }
.tick { position: absolute; bottom: 3px; color: #2f83bd; font-size: 10px; line-height: 16px; white-space: nowrap; -webkit-text-stroke: 4px #fff; paint-order: stroke fill; }
.seconds .tick { bottom: 1px; }
.toggle { width: 18px; display: grid; place-items: center; background: #eee; border: 1px solid #ccc; border-width: 0 1px; }
.toggle svg { width: 8px; height: 10px; }

/* Map */
.map { background: #e8f6fe; }
.map svg { width: 647px; max-width: 100%; margin: 0 auto; }
.land { fill: #f4f4f4; stroke: #ddd; stroke-width: 3; stroke-linejoin: round; }
.land .border { fill: none; }
.land .sea { fill: #e8f6fe; }
.dots { fill: #e57e25; stroke: #bbb; stroke-width: 2; }
```
